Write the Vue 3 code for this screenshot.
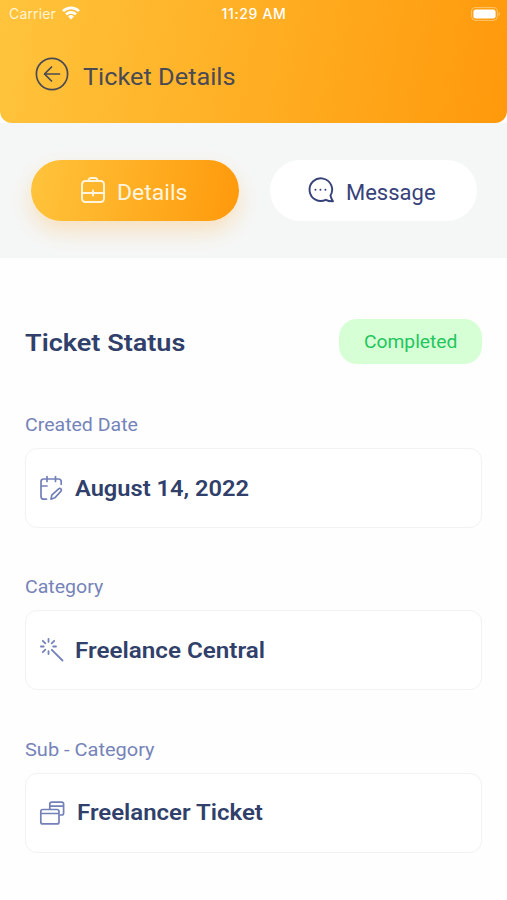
<script setup>
const fields = [
  { label: 'Created Date', value: 'August 14, 2022', icon: 'calendar' },
  { label: 'Category', value: 'Freelance Central', icon: 'wand' },
  { label: 'Sub - Category', value: 'Freelancer Ticket', icon: 'windows' },
]
</script>

<template>
  <main class="screen">
    <header class="header">
      <div class="statusbar">
        <div class="carrier">
          <span class="carrier-name">Carrier</span>
          <svg class="wifi" width="18" height="14" viewBox="0 0 18 14" fill="none" stroke="#fff" stroke-width="2.7">
            <path d="M1 5.1a11.5 11.5 0 0 1 16 0" />
            <path d="M4 8.4a7.2 7.2 0 0 1 10 0" />
            <path d="M9 13.5 6.1 10.5a4.1 4.1 0 0 1 5.8 0z" fill="#fff" stroke="none" />
          </svg>
        </div>
        <span class="clock">11:29 AM</span>
        <svg class="battery" width="30" height="14" viewBox="0 0 30 14">
          <rect x=".6" y=".6" width="25.8" height="12.8" rx="4" fill="none" stroke="#fff" stroke-opacity=".4" />
          <rect x="2.4" y="2.4" width="22.2" height="9.2" rx="2.4" fill="#fff" />
          <path d="M27.7 5v4c1.5-.6 1.5-3.4 0-4z" fill="#fff" fill-opacity=".5" />
        </svg>
      </div>
      <div class="titlebar">
        <svg class="back" width="34" height="34" viewBox="0 0 34 34" fill="none" stroke="#4a4a54" stroke-width="1.7" stroke-linecap="round" stroke-linejoin="round">
          <circle cx="17" cy="17" r="15.6" />
          <path d="M24.5 17h-15M16.5 10l-7 7 7 7" />
        </svg>
        <h1 class="title">Ticket Details</h1>
      </div>
    </header>

    <nav class="tabs">
      <button class="tab active">
        <svg width="26" height="28" viewBox="0 0 26 28" fill="none" stroke="#fff5df" stroke-width="1.9" stroke-linecap="round" stroke-linejoin="round">
          <rect x="2" y="5" width="22" height="21" rx="3.2" />
          <path d="M8 5l1.3-2.4Q9.8 2 10.7 2h4.6q.9 0 1.4.6L18 5M2 17h22M13 14.5v5" />
        </svg>
        <span class="tab-text">Details</span>
      </button>
      <button class="tab">
        <svg width="28" height="28" viewBox="0 0 28 28" fill="none" stroke="#38427a" stroke-width="1.9" stroke-linejoin="round">
          <path d="M23.5 19.5A11.3 11.3 0 1 0 18.8 23.8Q22 25.5 26 25.3Q24.1 22.7 23.5 19.5z" />
          <path d="M8.4 13.800h.1M13.400 13.800h.1M18.400 13.800h.1" stroke-linecap="round" />
        </svg>
        <span class="tab-text message">Message</span>
      </button>
    </nav>

    <section class="content">
      <div class="status-row">
        <h2 class="status-title">Ticket Status</h2>
        <div class="badge"><span class="badge-text">Completed</span></div>
      </div>

      <div v-for="field in fields" :key="field.icon" :class="['field', field.icon]">
        <span class="label">{{ field.label }}</span>
        <div class="box">
          <svg v-if="field.icon === 'calendar'" width="26" height="26" viewBox="0 0 26 26" fill="none" stroke="#7480b8" stroke-width="1.7" stroke-linecap="round" stroke-linejoin="round">
            <path d="M7.5 24.2H4.8Q2 24.2 2 21.5V6.7Q2 4 4.8 4h14.7Q22.2 4 22.2 6.7v2.5M8 1.5v5M16.5 1.5v5M2 11h6" />
            <path d="M12 24.2l.8-4 6.8-6.4q1.2-1 2.3.1t.1 2.3L15.8 22.8z" />
          </svg>
          <svg v-else-if="field.icon === 'wand'" width="26" height="26" viewBox="0 0 26 26" fill="none" stroke="#7480b8" stroke-width="1.8" stroke-linecap="round">
            <path d="M9.5 2v2.8M9.500 14.200v2.800M1.900 9.500h2.800M14.200 9.500h2.800M3.800 3.800l2.500 2.500M15.200 3.800l-2.500 2.500M3.800 15.200l2.500-2.500M12.800 12.800L23.500 23.500" />
          </svg>
          <svg v-else width="27" height="26" viewBox="0 0 27 26" fill="none" stroke="#7480b8" stroke-width="1.7" stroke-linejoin="round">
            <rect x="1.8" y="9.5" width="18.2" height="14.4" rx="2" />
            <path d="M1.8 13.500H20M10.800 9V4.200Q10.800 2.200 12.800 2.200H22.600Q24.600 2.200 24.600 4.200V13Q24.600 15 22.600 15H20.500M10.800 6.200H24.600" />
          </svg>
          <span class="value">{{ field.value }}</span>
        </div>
      </div>
    </section>
  </main>
</template>

<style>
body {
  background: #fff;
}
</style>

<style scoped>
.screen {
  box-sizing: border-box;
  height: 900px;
  overflow: hidden;
  background: #fefefe;
  font-family: Roboto, "Liberation Sans", sans-serif;
  color: #313f6b;
}
.header {
  height: 123px;
  border-radius: 0 0 12px 12px;
  background: linear-gradient(100deg, #ffc43c, #ff990b);
}
.statusbar {
  display: grid;
  grid-template-columns: 1fr auto 1fr;
  align-items: center;
  height: 27px;
  padding: 0 6px 0 9px;
  color: #fff;
  font-family: Inter, sans-serif;
  font-size: 14px;
}
.carrier {
  display: flex;
  align-items: center;
  gap: 6px;
}
.carrier-name {
  color: #fff3d5;
  letter-spacing: 0.15px;
}
.wifi {
  margin-top: -2px;
}
.clock {
  margin-right: 2px;
  font-weight: 500;
  letter-spacing: 0.65px;
}
.battery {
  justify-self: end;
}
.titlebar {
  display: flex;
  align-items: center;
  gap: 14px;
  padding: 30px 0 0 35px;
}
.title {
  margin: 6px 0 0;
  color: #4a4a54;
  font-size: 24px;
  line-height: 28px;
  font-weight: 400;
  transform: scaleX(1.055);
  transform-origin: left;
}
.tabs {
  display: grid;
  grid-template-columns: 208px 207px;
  gap: 31px;
  box-sizing: border-box;
  height: 135px;
  padding: 37px 0 0 31px;
  background: #f5f7f7;
  overflow: hidden;
}
.tab {
  display: flex;
  align-items: center;
  justify-content: flex-start;
  height: 60.5px;
  padding: 0 0 0 37px;
  gap: 11px;
  border: 0;
  border-radius: 31px;
  background: #fff;
  color: #38427a;
  font: inherit;
  font-size: 22px;
}
.tab.active {
  padding-left: 49px;
  background: linear-gradient(100deg, #ffc43c, #ff990b);
  box-shadow: 0 10px 22px rgba(255, 173, 60, 0.3);
  color: #fff5df;
}
.tab-text {
  padding-top: 4px;
  transform: scaleX(1.045);
  transform-origin: left;
}
.tab-text.message {
  transform: none;
}
.content {
  padding: 61px 25px 0;
}
.status-row {
  display: flex;
  align-items: center;
  justify-content: space-between;
  height: 45px;
  margin-bottom: 48px;
}
.status-title {
  margin: 3px 0 0;
  font-size: 24px;
  line-height: 28px;
  font-weight: 600;
  transform: scaleX(1.127);
  transform-origin: left;
}
.badge {
  display: flex;
  align-items: center;
  justify-content: center;
  width: 143px;
  height: 45px;
  border-radius: 18px;
  background: #d7ffd5;
  color: #23c65d;
  font-size: 18px;
}
.badge-text {
  transform: scaleX(1.07);
}
.field {
  height: 162.3px;
}
.label {
  display: block;
  height: 36px;
  color: #7683b9;
  font-size: 18px;
  line-height: 26px;
  transform: scaleX(1.085);
  transform-origin: left;
}
.windows .label {
  transform: scaleX(1.11);
}
.box {
  display: flex;
  align-items: center;
  box-sizing: border-box;
  height: 80px;
  padding-left: 13px;
  gap: 10px;
  border: 1px solid #f1f2f4;
  border-radius: 12px;
  background: #fff;
}
.value {
  font-size: 22px;
  font-weight: 600;
  transform: scaleX(1.075);
  transform-origin: left;
}
.wand .value {
  transform: scaleX(1.1);
}
.windows .value {
  margin-left: 1px;
  transform: scaleX(1.09);
}
</style>
